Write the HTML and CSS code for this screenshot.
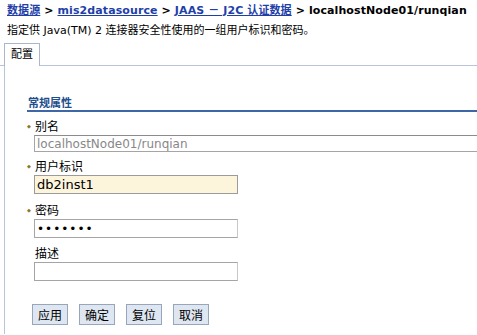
FILE: index.html
```html
<!DOCTYPE html>
<html lang="zh-CN">
<head>
    <meta charset="UTF-8">
    <title>localhostNode01/runqian</title>
    <link rel="stylesheet" href="styles.css">
</head>
<body>

    <div class="breadcrumb">
        <a href="#">数据源</a> &gt; <a href="#">mis2datasource</a> &gt; <a href="#">JAAS － J2C 认证数据</a> &gt; localhostNode01/runqian
    </div>
    <p class="intro">指定供 Java(TM) 2 连接器安全性使用的一组用户标识和密码。</p>

    <div class="tabs">
        <span class="tab">配置</span>
    </div>

    <div class="panel">
        <h3 class="section-title">常规属性</h3>

        <form class="props">
            <label class="req">别名</label>
            <input type="text" class="wide" value="localhostNode01/runqian" readonly>

            <label class="req">用户标识</label>
            <input type="text" class="field focus" value="db2inst1">

            <label class="req">密码</label>
            <input type="password" class="field" value="1234567">

            <label>描述</label>
            <input type="text" class="field" value="">

            <div class="buttons">
                <button type="button">应用</button>
                <button type="button">确定</button>
                <button type="button">复位</button>
                <button type="button">取消</button>
            </div>
        </form>
    </div>

</body>
</html>
```

FILE: styles.css
```css
body {
    margin: 0;
    font-family: "DejaVu Sans", Verdana, "Noto Sans CJK SC", sans-serif;
    font-size: 11px;
    color: #000;
    background: #fff;
    overflow: hidden;
}

.breadcrumb {
    padding: 3px 0 0 7px;
    line-height: 16px;
    font-size: 11px;
    font-weight: bold;
    letter-spacing: 0.1px;
    white-space: nowrap;
}

.breadcrumb a {
    color: #1f3fa8;
}

.intro {
    margin: 0;
    padding: 4px 0 0 7px;
    line-height: 16px;
    font-size: 11px;
}

.tabs {
    margin-top: 3px;
    padding-left: 4px;
    height: 23px;
    border-bottom: 1px solid #b7c4d9;
}

.tab {
    display: inline-block;
    width: 36px;
    height: 23px;
    box-sizing: border-box;
    padding: 4px 0 0 6px;
    line-height: 14px;
    border: 1px solid #a9b6cc;
    border-bottom: none;
    background: #fff;
    position: relative;
    top: 1px;
    font-size: 11px;
}

.panel {
    margin-left: 4px;
    border-left: 1px solid #b7c4d9;
    padding: 31px 0 0 22px;
    height: 237px;
}

.section-title {
    margin: 0;
    padding: 0 0 0 1px;
    line-height: 13px;
    font-size: 11px;
    font-weight: bold;
    color: #1e4e8c;
    border-bottom: 2px solid #3d67a6;
}

.props label {
    display: block;
    margin: 8px 0 0 8px;
    line-height: 13px;
    font-size: 12px;
}

.props label.req::before {
    content: "◆";
    display: inline-block;
    width: 8px;
    margin-left: -8px;
    font-size: 5px;
    vertical-align: 3px;
    color: #8a7a2a;
}

.props input {
    display: block;
    margin: 1px 0 0 7px;
    height: 19px;
    box-sizing: border-box;
    padding: 1px 2px;
    border: 1px solid #a5a5a5;
    border-right-color: #c8c8c8;
    font-family: "DejaVu Sans", sans-serif;
    font-size: 13px;
    background: #fff;
}

.props input.wide {
    margin-bottom: 8px;
    width: 443px;
    border-right: none;
    border-top-color: #8c8c8c;
    color: #888;
    font-size: 12px;
    height: 17px;
    padding: 0 2px;
}

.props input.field {
    width: 204px;
    margin-bottom: 10px;
}

.props input.field + label,
.props input.wide + label {
    margin-top: 0;
}

.props input.focus {
    background: #fdf4dc;
    border-color: #9b9b9b;
}

.props input[type=password] {
    font-size: 12px;
    letter-spacing: 1px;
}

.buttons {
    margin: 23px 0 0 5px;
    display: flex;
    gap: 11px;
}

.buttons button {
    width: 36px;
    height: 21px;
    padding: 0;
    border: 1px solid #98a6bb;
    background: #dde6f1;
    font-family: "Noto Sans CJK SC", sans-serif;
    font-size: 12px;
    color: #000;
}
```
